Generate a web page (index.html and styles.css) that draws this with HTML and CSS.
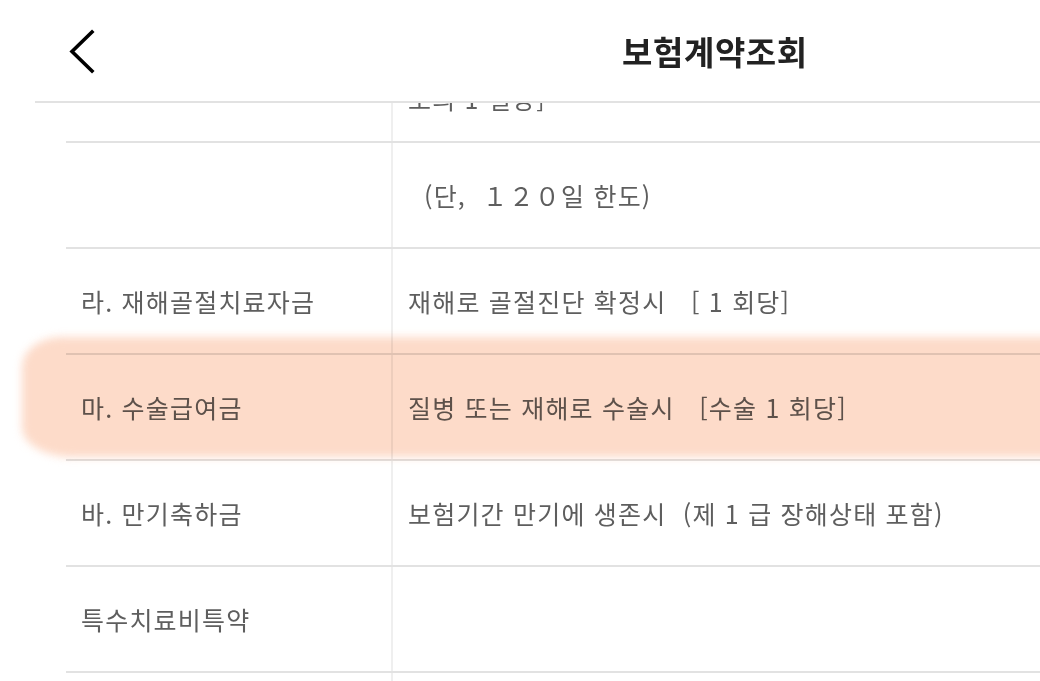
FILE: index.html
```html
<!DOCTYPE html>
<html lang="ko">
<head>
  <meta charset="UTF-8" />
  <meta name="viewport" content="width=device-width, initial-scale=1.0" />
  <title>보험계약조회</title>
  <link rel="stylesheet" href="styles.css">
</head>
<body>
  <header class="topbar">
    <button class="back" aria-label="뒤로">
      <svg width="30" height="46" viewBox="0 0 30 46">
        <path d="M23 4 L3 23.5 L23 43" fill="none" stroke="#000" stroke-width="3.6" stroke-linecap="square" stroke-linejoin="miter"/>
      </svg>
    </button>
    <h1 class="title">보험계약조회</h1>
  </header>

  <div class="viewport">
    <div class="table">
      <div class="row row-cut">
        <div class="cell label"></div>
        <div class="cell desc">보의 1 일당]</div>
      </div>
      <div class="row">
        <div class="cell label"></div>
        <div class="cell desc indent">(단,&nbsp;&nbsp;１２０일 한도)</div>
      </div>
      <div class="row">
        <div class="cell label">라. 재해골절치료자금</div>
        <div class="cell desc">재해로 골절진단 확정시&nbsp;&nbsp;&nbsp;[ 1 회당]</div>
      </div>
      <div class="row">
        <div class="cell label">마. 수술급여금</div>
        <div class="cell desc">질병 또는 재해로 수술시&nbsp;&nbsp;&nbsp;[수술 1 회당]</div>
      </div>
      <div class="row">
        <div class="cell label">바. 만기축하금</div>
        <div class="cell desc">보험기간 만기에 생존시&nbsp;&nbsp;(제 1 급 장해상태 포함)</div>
      </div>
      <div class="row">
        <div class="cell label">특수치료비특약</div>
        <div class="cell desc"></div>
      </div>
      <div class="row">
        <div class="cell label"></div>
        <div class="cell desc"></div>
      </div>
    </div>
    <!-- highlighter mark over the 마 row -->
    <div class="marker"></div>
  </div>
</body>
</html>
```

FILE: styles.css
```css
body {
  margin: 0;
  background: #fff;
  font-family: "Noto Sans CJK KR", "Noto Sans", sans-serif;
  color: #5e5e5e;
  overflow: hidden;
}
.topbar {
  height: 101px;
  margin-left: 35px;
  border-bottom: 2px solid #e2e2e2;
  display: flex;
  align-items: center;
  padding-left: 34px;
}
.back {
  background: none;
  border: none;
  padding: 0;
  width: 30px;
  height: 46px;
  cursor: pointer;
}
.back svg {
  display: block;
}
.title {
  margin: 0 0 0 523px;
  font-size: 33px;
  font-weight: 700;
  color: #222;
  letter-spacing: 0.6px;
}
.viewport {
  position: relative;
  height: 578px;
  overflow: hidden;
}
.table {
  margin-left: 66px;
  margin-top: -66px;
}
.row {
  display: grid;
  grid-template-columns: 327px 1fr;
  height: 104px;
  border-bottom: 2px solid #e2e2e2;
}
.cell {
  display: flex;
  align-items: center;
  font-size: 25px;
  letter-spacing: 1.2px;
  white-space: nowrap;
}
.row-cut .cell {
  align-items: flex-end;
  padding-bottom: 25px;
}
.label {
  padding-left: 15px;
  border-right: 2px solid #efefef;
}
.desc {
  padding-left: 15px;
}
.desc.indent {
  padding-left: 31px;
}
.marker {
  position: absolute;
  left: 22px;
  top: 234px;
  width: 1040px;
  height: 120px;
  background: #fdd9c6;
  border-radius: 40px 0 0 50px / 30px 0 0 30px;
  filter: blur(4px);
  mix-blend-mode: multiply;
  opacity: 0.95;
}
```
